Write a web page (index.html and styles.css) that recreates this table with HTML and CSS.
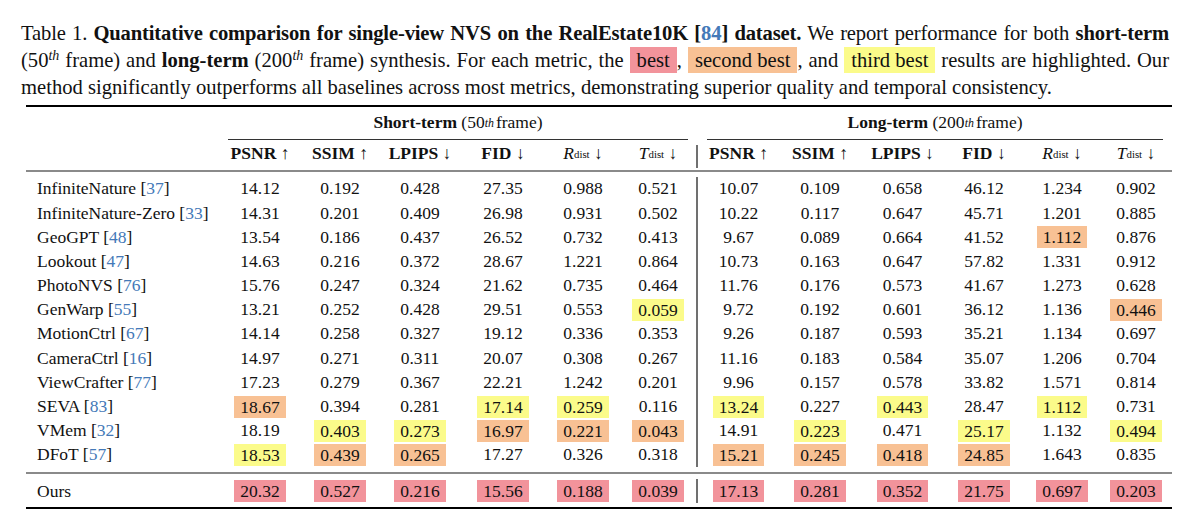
FILE: index.html
```html
<!DOCTYPE html>
<html>
<head>
<meta charset="utf-8">
<link rel="stylesheet" href="styles.css">
</head>
<body>
<div class="page">
  <div class="caption">
    <div class="cline just l1">Table 1. <b>Quantitative comparison for single-view NVS on the RealEstate10K [<span class="ref">84</span>] dataset.</b> We report performance for both <b>short-term</b></div>
    <div class="cline just">(50<sup><i>th</i></sup> frame) and <b>long-term</b> (200<sup><i>th</i></sup> frame) synthesis. For each metric, the <span class="hl s1">best</span>, <span class="hl s2">second best</span>, and <span class="hl s3">third best</span> results are highlighted. Our</div>
    <div class="cline">method significantly outperforms all baselines across most metrics, demonstrating superior quality and temporal consistency.</div>
  </div>

  <div class="tbl">
    <div class="rule top"></div>

    <div></div>
    <div class="c grp span6"><b>Short-term</b>&nbsp;(50<sup><i>th</i></sup>frame)</div>
    <div></div>
    <div class="c grp span6"><b>Long-term</b>&nbsp;(200<sup><i>th</i></sup>frame)</div>

    <div></div>
    <div class="cmid span6 left"></div>
    <div></div>
    <div class="cmid span6 right"></div>

    <div></div>
    <div class="c h"><b>PSNR</b>&nbsp;↑</div>
    <div class="c h"><b>SSIM</b>&nbsp;↑</div>
    <div class="c h"><b>LPIPS</b>&nbsp;↓</div>
    <div class="c h"><b>FID</b>&nbsp;↓</div>
    <div class="c h"><i>R</i><sub>dist</sub>&nbsp;↓</div>
    <div class="c h"><i>T</i><sub>dist</sub>&nbsp;↓</div>
    <div class="vb vbh"></div>
    <div class="c h"><b>PSNR</b>&nbsp;↑</div>
    <div class="c h"><b>SSIM</b>&nbsp;↑</div>
    <div class="c h"><b>LPIPS</b>&nbsp;↓</div>
    <div class="c h"><b>FID</b>&nbsp;↓</div>
    <div class="c h"><i>R</i><sub>dist</sub>&nbsp;↓</div>
    <div class="c h"><i>T</i><sub>dist</sub>&nbsp;↓</div>

    <div class="rule mid"></div>
    <div class="gap"></div>

    <div class="c n">InfiniteNature [<span class="ref">37</span>]</div>
    <div class="c">14.12</div><div class="c">0.192</div><div class="c">0.428</div><div class="c">27.35</div><div class="c">0.988</div><div class="c">0.521</div>
    <div class="vb"></div>
    <div class="c">10.07</div><div class="c">0.109</div><div class="c">0.658</div><div class="c">46.12</div><div class="c">1.234</div><div class="c">0.902</div>

    <div class="c n">InfiniteNature-Zero [<span class="ref">33</span>]</div>
    <div class="c">14.31</div><div class="c">0.201</div><div class="c">0.409</div><div class="c">26.98</div><div class="c">0.931</div><div class="c">0.502</div>
    <div class="vb"></div>
    <div class="c">10.22</div><div class="c">0.117</div><div class="c">0.647</div><div class="c">45.71</div><div class="c">1.201</div><div class="c">0.885</div>

    <div class="c n">GeoGPT [<span class="ref">48</span>]</div>
    <div class="c">13.54</div><div class="c">0.186</div><div class="c">0.437</div><div class="c">26.52</div><div class="c">0.732</div><div class="c">0.413</div>
    <div class="vb"></div>
    <div class="c">9.67</div><div class="c">0.089</div><div class="c">0.664</div><div class="c">41.52</div><div class="c"><span class="hl s2">1.112</span></div><div class="c">0.876</div>

    <div class="c n">Lookout [<span class="ref">47</span>]</div>
    <div class="c">14.63</div><div class="c">0.216</div><div class="c">0.372</div><div class="c">28.67</div><div class="c">1.221</div><div class="c">0.864</div>
    <div class="vb"></div>
    <div class="c">10.73</div><div class="c">0.163</div><div class="c">0.647</div><div class="c">57.82</div><div class="c">1.331</div><div class="c">0.912</div>

    <div class="c n">PhotoNVS [<span class="ref">76</span>]</div>
    <div class="c">15.76</div><div class="c">0.247</div><div class="c">0.324</div><div class="c">21.62</div><div class="c">0.735</div><div class="c">0.464</div>
    <div class="vb"></div>
    <div class="c">11.76</div><div class="c">0.176</div><div class="c">0.573</div><div class="c">41.67</div><div class="c">1.273</div><div class="c">0.628</div>

    <div class="c n">GenWarp [<span class="ref">55</span>]</div>
    <div class="c">13.21</div><div class="c">0.252</div><div class="c">0.428</div><div class="c">29.51</div><div class="c">0.553</div><div class="c"><span class="hl s3">0.059</span></div>
    <div class="vb"></div>
    <div class="c">9.72</div><div class="c">0.192</div><div class="c">0.601</div><div class="c">36.12</div><div class="c">1.136</div><div class="c"><span class="hl s2">0.446</span></div>

    <div class="c n">MotionCtrl [<span class="ref">67</span>]</div>
    <div class="c">14.14</div><div class="c">0.258</div><div class="c">0.327</div><div class="c">19.12</div><div class="c">0.336</div><div class="c">0.353</div>
    <div class="vb"></div>
    <div class="c">9.26</div><div class="c">0.187</div><div class="c">0.593</div><div class="c">35.21</div><div class="c">1.134</div><div class="c">0.697</div>

    <div class="c n">CameraCtrl [<span class="ref">16</span>]</div>
    <div class="c">14.97</div><div class="c">0.271</div><div class="c">0.311</div><div class="c">20.07</div><div class="c">0.308</div><div class="c">0.267</div>
    <div class="vb"></div>
    <div class="c">11.16</div><div class="c">0.183</div><div class="c">0.584</div><div class="c">35.07</div><div class="c">1.206</div><div class="c">0.704</div>

    <div class="c n">ViewCrafter [<span class="ref">77</span>]</div>
    <div class="c">17.23</div><div class="c">0.279</div><div class="c">0.367</div><div class="c">22.21</div><div class="c">1.242</div><div class="c">0.201</div>
    <div class="vb"></div>
    <div class="c">9.96</div><div class="c">0.157</div><div class="c">0.578</div><div class="c">33.82</div><div class="c">1.571</div><div class="c">0.814</div>

    <div class="c n">SEVA [<span class="ref">83</span>]</div>
    <div class="c"><span class="hl s2">18.67</span></div><div class="c">0.394</div><div class="c">0.281</div><div class="c"><span class="hl s3">17.14</span></div><div class="c"><span class="hl s3">0.259</span></div><div class="c">0.116</div>
    <div class="vb"></div>
    <div class="c"><span class="hl s3">13.24</span></div><div class="c">0.227</div><div class="c"><span class="hl s3">0.443</span></div><div class="c">28.47</div><div class="c"><span class="hl s3">1.112</span></div><div class="c">0.731</div>

    <div class="c n">VMem [<span class="ref">32</span>]</div>
    <div class="c">18.19</div><div class="c"><span class="hl s3">0.403</span></div><div class="c"><span class="hl s3">0.273</span></div><div class="c"><span class="hl s2">16.97</span></div><div class="c"><span class="hl s2">0.221</span></div><div class="c"><span class="hl s2">0.043</span></div>
    <div class="vb"></div>
    <div class="c">14.91</div><div class="c"><span class="hl s3">0.223</span></div><div class="c">0.471</div><div class="c"><span class="hl s3">25.17</span></div><div class="c">1.132</div><div class="c"><span class="hl s3">0.494</span></div>

    <div class="c n">DFoT [<span class="ref">57</span>]</div>
    <div class="c"><span class="hl s3">18.53</span></div><div class="c"><span class="hl s2">0.439</span></div><div class="c"><span class="hl s2">0.265</span></div><div class="c">17.27</div><div class="c">0.326</div><div class="c">0.318</div>
    <div class="vb"></div>
    <div class="c"><span class="hl s2">15.21</span></div><div class="c"><span class="hl s2">0.245</span></div><div class="c"><span class="hl s2">0.418</span></div><div class="c"><span class="hl s2">24.85</span></div><div class="c">1.643</div><div class="c">0.835</div>

    <div class="gap"></div>
    <div class="rule mid"></div>
    <div class="gap"></div>

    <div class="c n">Ours</div>
    <div class="c"><span class="hl s1">20.32</span></div><div class="c"><span class="hl s1">0.527</span></div><div class="c"><span class="hl s1">0.216</span></div><div class="c"><span class="hl s1">15.56</span></div><div class="c"><span class="hl s1">0.188</span></div><div class="c"><span class="hl s1">0.039</span></div>
    <div class="vb"></div>
    <div class="c"><span class="hl s1">17.13</span></div><div class="c"><span class="hl s1">0.281</span></div><div class="c"><span class="hl s1">0.352</span></div><div class="c"><span class="hl s1">21.75</span></div><div class="c"><span class="hl s1">0.697</span></div><div class="c"><span class="hl s1">0.203</span></div>

    <div class="gap"></div>
    <div class="rule top"></div>
  </div>
</div>
</body>
</html>
```

FILE: styles.css
```css
html, body {
  margin: 0;
  padding: 0;
  background: #ffffff;
}

body {
  font-family: "Liberation Serif", "Times New Roman", serif;
  color: #111111;
}

.page {
  width: 1200px;
  height: 514px;
  overflow: hidden;
}

.caption {
  padding: 20px 0 0 21px;
  width: 1148px;
  font-size: 20.6px;
}

.cline {
  height: 27px;
  line-height: 27px;
  white-space: nowrap;
}

.cline.just {
  text-align: justify;
  text-align-last: justify;
  white-space: normal;
}

.cline.l1 {
  letter-spacing: -0.15px;
}

sup {
  font-size: 0.68em;
  line-height: 0;
  vertical-align: 0.5em;
}

.grp sup {
  margin-right: 2px;
}

sub {
  font-size: 0.62em;
  line-height: 0;
  vertical-align: -0.2em;
}

.ref {
  color: #4479b8;
}

.hl {
  display: inline-block;
  line-height: 22px;
  padding: 0 6px;
}

.caption .hl {
  line-height: 24px;
  padding: 1px 7px;
}

.s1 { background: #f2939b; }
.s2 { background: #f8c194; }
.s3 { background: #fbfb8a; }

.tbl {
  display: grid;
  margin: 4px 0 0 26px;
  width: 1146px;
  grid-template-columns: 194px 80px 80px 80px 86px 74px 76px 2px 81px 82px 83px 80px 76px 72px;
  grid-template-rows: 2px 32px 1px 30px 2px 5px repeat(12, 24.2px) 5px 2px 5px 24px 4px 2px;
  font-size: 17.5px;
}

.rule {
  grid-column: 1 / -1;
}

.rule.top {
  background: #000000;
}

.rule.mid {
  background: #8a8a8a;
}

.gap {
  grid-column: 1 / -1;
}

.span6 {
  grid-column: span 6;
}

.cmid {
  background: #333333;
}

.cmid.left {
  margin: 0 8px 0 8px;
}

.cmid.right {
  margin: 0 9px 0 9px;
}

.c {
  display: flex;
  align-items: center;
  justify-content: center;
  white-space: nowrap;
  line-height: 1;
}

.c.grp {
  padding-bottom: 1px;
}

.c.h {
  padding-bottom: 3px;
}

.c.n {
  justify-content: flex-start;
  padding-left: 11px;
}

.vb {
  background: #707070;
}

.vb.vbh {
  margin: 5px 0 2px 0;
}
```
